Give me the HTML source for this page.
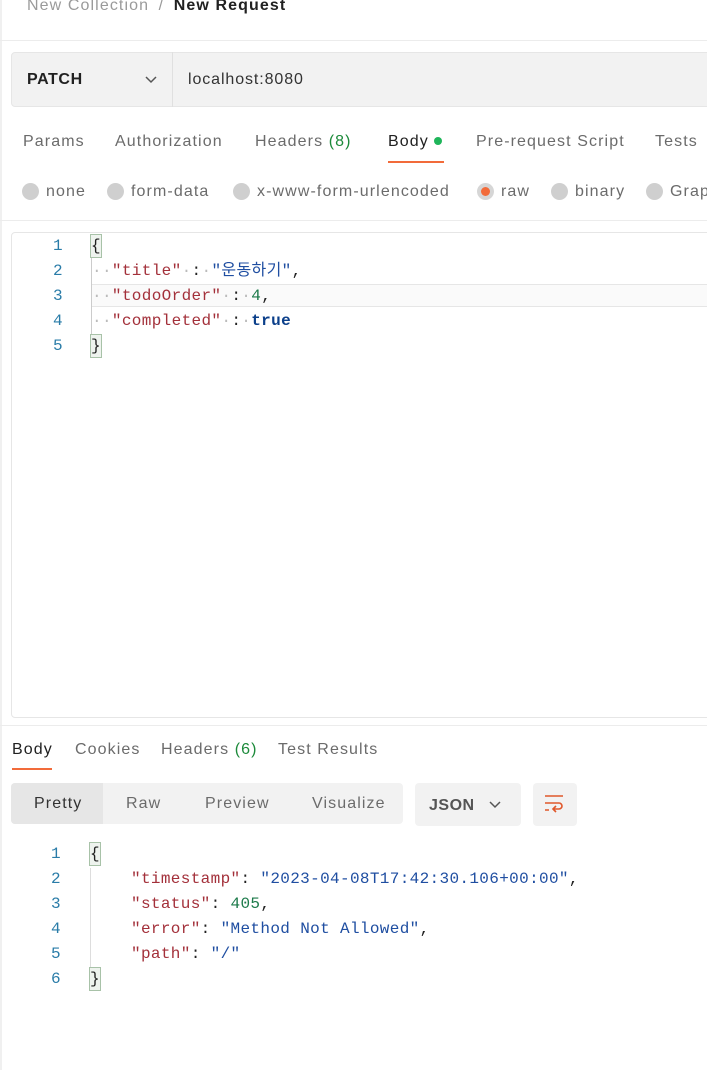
<!DOCTYPE html>
<html><head><meta charset="utf-8"><style>
*{margin:0;padding:0;box-sizing:border-box}
body{width:707px;height:1070px;background:#fff;font-family:"Liberation Sans","Noto Sans CJK KR",sans-serif;color:#212121;position:relative;overflow:hidden}
.a{position:absolute;white-space:nowrap;letter-spacing:1.1px}
.t{font-size:16px;color:#6b6b6b}
.m{font-family:"Liberation Mono","Noto Sans CJK KR",monospace;font-size:16px;line-height:20px;letter-spacing:0.35px}
.ln{color:#2a7ca8;width:20px;text-align:right}
.k{color:#a3303a}.s{color:#1f4ea1}.n{color:#1c7a4a}.b{color:#0b3f8a;font-weight:bold}.d{color:#bbb}
.r{width:17px;height:17px;border-radius:50%;background:#cfcfcf}
.br{border:1px solid #a8c2a8;background:#eef3ee}
</style></head><body>
<div class="a" style="left:0;top:0;width:2px;height:1070px;background:#f0f0f0"></div>
<div class="a" style="left:27px;top:-3px;font-size:16px;color:#9a9a9a">New Collection <span style="margin:0 4px">/</span> <span style="color:#212121;font-weight:bold">New Request</span></div>
<div class="a" style="left:0;top:40px;width:707px;height:1px;background:#ececec"></div>
<div class="a" style="left:11px;top:52px;width:700px;height:55px;background:#f2f2f2;border:1px solid #e6e6e6;border-radius:4px"></div>
<div class="a" style="left:172px;top:52px;width:1px;height:55px;background:#e0e0e0"></div>
<div class="a" style="left:27px;top:71px;font-size:16px;font-weight:bold;letter-spacing:0.6px">PATCH</div>
<svg class="a" style="left:144px;top:75px" width="14" height="10"><path d="M2 2l5 5 5-5" fill="none" stroke="#555" stroke-width="1.5"/></svg>
<div class="a" style="left:188px;top:71px;font-size:16px;color:#333;letter-spacing:0.9px">localhost:8080</div>
<div class="a t" style="left:23px;top:133px">Params</div>
<div class="a t" style="left:115px;top:133px">Authorization</div>
<div class="a t" style="left:255px;top:133px">Headers <span style="color:#1c8a3a">(8)</span></div>
<div class="a" style="left:388px;top:133px;font-size:16px;color:#212121">Body</div>
<div class="a" style="left:434px;top:137px;width:8px;height:8px;border-radius:50%;background:#1fb55a"></div>
<div class="a" style="left:388px;top:161px;width:56px;height:2px;background:#f26b3a"></div>
<div class="a t" style="left:476px;top:133px">Pre-request Script</div>
<div class="a t" style="left:655px;top:133px">Tests</div>
<div class="a r" style="left:22px;top:183px"></div><div class="a t" style="left:46px;top:183px">none</div>
<div class="a r" style="left:107px;top:183px"></div><div class="a t" style="left:131px;top:183px">form-data</div>
<div class="a r" style="left:233px;top:183px"></div><div class="a t" style="left:257px;top:183px">x-www-form-urlencoded</div>
<div class="a r" style="left:477px;top:183px;background:#d6d6d6"></div><div class="a" style="left:481px;top:187px;width:9px;height:9px;border-radius:50%;background:#f26b3a"></div><div class="a t" style="left:501px;top:183px">raw</div>
<div class="a r" style="left:551px;top:183px"></div><div class="a t" style="left:575px;top:183px">binary</div>
<div class="a r" style="left:646px;top:183px"></div><div class="a t" style="left:670px;top:183px">Grap</div>
<div class="a" style="left:0;top:220px;width:707px;height:1px;background:#ececec"></div>
<div class="a" style="left:11px;top:232px;width:710px;height:486px;border:1px solid #e6e6e6;border-radius:4px"></div>
<div class="a" style="left:92px;top:284px;width:615px;height:23px;background:#fafafa;border-top:1px solid #e6e6e6;border-bottom:1px solid #e6e6e6"></div>
<div class="a" style="left:91px;top:258px;width:1px;height:76px;background:#ccc"></div>
<div class="a m ln" style="left:43px;top:236px">1</div>
<div class="a m ln" style="left:43px;top:261px">2</div>
<div class="a m ln" style="left:43px;top:286px">3</div>
<div class="a m ln" style="left:43px;top:311px">4</div>
<div class="a m ln" style="left:43px;top:336px">5</div>
<div class="a m br" style="left:90px;top:234px;height:24px;line-height:22px">{</div>
<div class="a m" style="left:92px;top:261px"><span class="d">··</span><span class="k">"title"</span><span class="d">·</span>:<span class="d">·</span><span class="s">"운동하기"</span>,</div>
<div class="a m" style="left:92px;top:286px"><span class="d">··</span><span class="k">"todoOrder"</span><span class="d">·</span>:<span class="d">·</span><span class="n">4</span>,</div>
<div class="a m" style="left:92px;top:311px"><span class="d">··</span><span class="k">"completed"</span><span class="d">·</span>:<span class="d">·</span><span class="b">true</span></div>
<div class="a m br" style="left:90px;top:334px;height:24px;line-height:22px">}</div>
<div class="a" style="left:0;top:725px;width:707px;height:1px;background:#ececec"></div>
<div class="a" style="left:12px;top:741px;font-size:16px;color:#212121">Body</div>
<div class="a" style="left:12px;top:768px;width:40px;height:2px;background:#f26b3a"></div>
<div class="a t" style="left:75px;top:741px">Cookies</div>
<div class="a t" style="left:161px;top:741px">Headers <span style="color:#1c8a3a">(6)</span></div>
<div class="a t" style="left:278px;top:741px">Test Results</div>
<div class="a" style="left:11px;top:783px;width:392px;height:41px;background:#f2f2f2;border-radius:4px"></div>
<div class="a" style="left:11px;top:783px;width:92px;height:41px;background:#e6e6e6;border-radius:4px 0 0 4px"></div>
<div class="a" style="left:34px;top:795px;font-size:16px;color:#333">Pretty</div>
<div class="a t" style="left:126px;top:795px">Raw</div>
<div class="a t" style="left:205px;top:795px">Preview</div>
<div class="a t" style="left:312px;top:795px">Visualize</div>
<div class="a" style="left:415px;top:783px;width:106px;height:43px;background:#f2f2f2;border-radius:4px"></div>
<div class="a" style="left:429px;top:797px;font-size:16px;font-weight:bold;color:#555;letter-spacing:0.5px">JSON</div>
<svg class="a" style="left:488px;top:800px" width="14" height="10"><path d="M2 2l5 5 5-5" fill="none" stroke="#555" stroke-width="1.5"/></svg>
<div class="a" style="left:533px;top:783px;width:44px;height:43px;background:#f2f2f2;border-radius:4px"></div>
<svg class="a" style="left:543px;top:793px" width="24" height="22"><path d="M2 3h18M2 10h14a3 3 0 010 6h-5M2 17h4" fill="none" stroke="#e0572a" stroke-width="1.6"/><path d="M13 13l-3 3 3 3" fill="none" stroke="#e0572a" stroke-width="1.6"/></svg>
<div class="a" style="left:90px;top:868px;width:1px;height:100px;background:#ddd"></div>
<div class="a m ln" style="left:41px;top:844px">1</div>
<div class="a m ln" style="left:41px;top:869px">2</div>
<div class="a m ln" style="left:41px;top:894px">3</div>
<div class="a m ln" style="left:41px;top:919px">4</div>
<div class="a m ln" style="left:41px;top:944px">5</div>
<div class="a m ln" style="left:41px;top:969px">6</div>
<div class="a m br" style="left:89px;top:842px;height:24px;line-height:22px">{</div>
<div class="a m" style="left:131px;top:869px"><span class="k">"timestamp"</span>: <span class="s">"2023-04-08T17:42:30.106+00:00"</span>,</div>
<div class="a m" style="left:131px;top:894px"><span class="k">"status"</span>: <span class="n">405</span>,</div>
<div class="a m" style="left:131px;top:919px"><span class="k">"error"</span>: <span class="s">"Method Not Allowed"</span>,</div>
<div class="a m" style="left:131px;top:944px"><span class="k">"path"</span>: <span class="s">"/"</span></div>
<div class="a m br" style="left:89px;top:967px;height:24px;line-height:22px">}</div>
</body></html>
